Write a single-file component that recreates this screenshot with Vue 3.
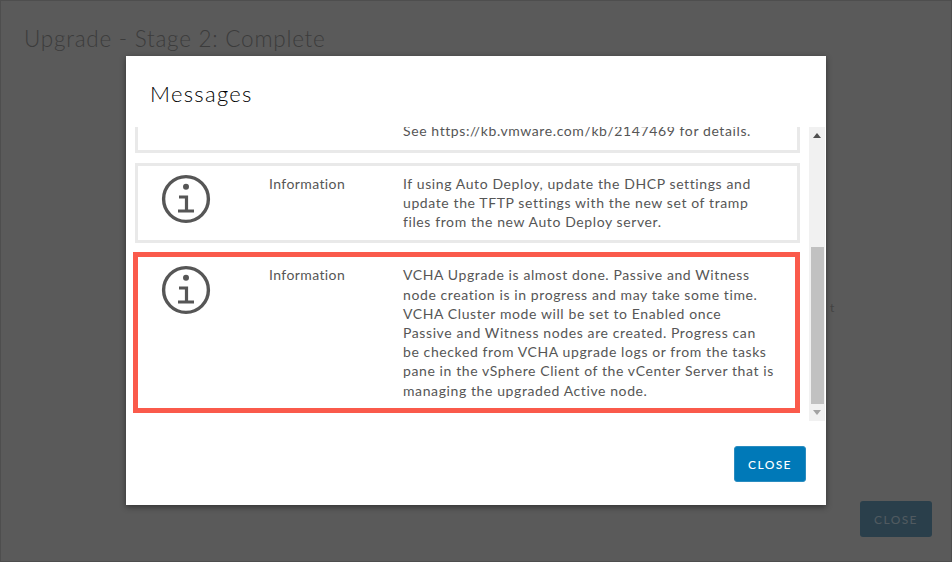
<script setup>
const messages = [
  { id: 1, lines: ['See https://kb.vmware.com/kb/2147469 for details.'], clipped: true },
  { id: 2, lines: ['If using Auto Deploy, update the DHCP settings and', 'update the TFTP settings with the new set of tramp', 'files from the new Auto Deploy server.'] },
  { id: 3, highlight: true, lines: ['VCHA Upgrade is almost done. Passive and Witness', 'node creation is in progress and may take some time.', 'VCHA Cluster mode will be set to Enabled once', 'Passive and Witness nodes are created. Progress can', 'be checked from VCHA upgrade logs or from the tasks', 'pane in the vSphere Client of the vCenter Server that is', 'managing the upgraded Active node.'] }
]
</script>

<template>
  <div class="page">
    <h1 class="page-title">Upgrade - Stage 2: Complete</h1>
    <div class="page-foot"><span class="btn dim">CLOSE</span></div>
    <span class="behind">t</span>

    <div class="modal">
      <h2 class="title">Messages</h2>
      <div class="body">
        <div class="list">
          <div v-for="m in messages" :key="m.id" class="card" :class="{ hot: m.highlight, clipped: m.clipped }">
            <div class="icon-cell">
              <svg v-if="!m.clipped" width="50" height="50" viewBox="0 0 50 50" fill="none" stroke="#565656">
                <circle cx="25" cy="25" r="22.4" stroke-width="3.4" />
                <circle cx="25" cy="12.8" r="3" fill="#565656" stroke="none" />
                <path d="M18 23H25.5V37M17 37H33" stroke-width="3.2" />
              </svg>
            </div>
            <div class="kind">{{ m.clipped ? '' : 'Information' }}</div>
            <div class="text">
              <div v-for="l in m.lines" :key="l">{{ l }}</div>
            </div>
          </div>
        </div>
        <div class="scrollbar">
          <span class="arrow up"></span>
          <span class="track"><span class="thumb"></span></span>
          <span class="arrow down"></span>
        </div>
      </div>
      <div class="foot"><button class="btn primary">CLOSE</button></div>
    </div>
  </div>
</template>

<style scoped>
.page {
  position: relative;
  width: 952px;
  height: 562px;
  box-sizing: border-box;
  background: #5a5a5a;
  border: 1px solid #4e4e4e;
  font-family: Lato, "Open Sans", sans-serif;
  overflow: hidden;
  display: flex;
  flex-direction: column;
  justify-content: space-between;
  padding: 25px 19px 24px 23px;
}
.page-title {
  margin: 0;
  font-size: 22.5px;
  font-weight: 300;
  line-height: 26px;
  color: #3c3c3c;
  letter-spacing: 0.75px;
}
.page-foot { display: flex; justify-content: flex-end; }
.behind {
  position: absolute;
  left: 829px;
  top: 299px;
  font-size: 12px;
  color: #444;
}
.modal {
  position: absolute;
  left: 125px;
  top: 55px;
  width: 700px;
  height: 449px;
  background: #fff;
  box-shadow: 0 2px 6px rgba(0, 0, 0, 0.45);
  display: flex;
  flex-direction: column;
}
.title {
  margin: 0;
  padding: 24px 0 0 24px;
  height: 47px;
  font-size: 22px;
  line-height: 28px;
  font-weight: 300;
  color: #000;
  letter-spacing: 1.3px;
}
.body {
  margin-left: 7px;
  height: 294px;
  display: flex;
  flex-shrink: 0;
}
.list {
  width: 667px;
  height: 286px;
  overflow: hidden;
  display: flex;
  flex-direction: column;
  justify-content: flex-end;
  gap: 10px;
  flex-shrink: 0;
}
.card {
  flex-shrink: 0;
  margin-left: 2px;
  box-sizing: border-box;
  border: 3px solid #e9e9e9;
  display: grid;
  grid-template-columns: 131px 134px 1fr;
  padding: 8px 0 8.4px 0;
  font-size: 14px;
  line-height: 19.2px;
  color: #565656;
}
.card.clipped { padding: 0 0 10px 0; border-top: 0; }
.card.hot {
  margin-left: 0;
  margin-top: -1px;
  border: 5px solid #fa5a4b;
  padding: 8.4px 0 0 0;
  height: 161px;
}
.icon-cell { padding-left: 23px; }
.icon-cell svg { display: block; }
.kind { white-space: nowrap; letter-spacing: 0.4px; }
.text { white-space: nowrap; letter-spacing: 0.6px; }
.scrollbar {
  margin-left: 9px;
  width: 16px;
  height: 294px;
  background: #f1f1f1;
  display: flex;
  flex-direction: column;
  align-items: center;
}
.arrow { width: 0; height: 0; border: 4px solid transparent; flex-shrink: 0; }
.arrow.up { border-bottom: 5px solid #505050; border-top: 0; margin: 6px 0 5px; }
.arrow.down { border-top: 5px solid #a3a3a3; border-bottom: 0; margin: 6px 0 6px; }
.track { flex: 1; width: 100%; display: flex; flex-direction: column; justify-content: flex-end; }
.thumb { display: block; width: 13px; margin-left: 2px; height: 157px; background: #c1c1c1; }
.foot {
  display: flex;
  justify-content: flex-end;
  padding: 25px 20px 0 0;
}
.btn {
  box-sizing: border-box;
  width: 72px;
  height: 36px;
  border-radius: 3px;
  display: flex;
  align-items: center;
  justify-content: center;
  font-family: inherit;
  font-size: 12px;
  font-weight: 500;
  letter-spacing: 1.4px;
  padding: 0;
}
.primary { background: #0079b8; border: 1px solid #2a8cc0; color: #fff; }
.dim { background: #2a3f4b; color: #505a60; }
</style>
